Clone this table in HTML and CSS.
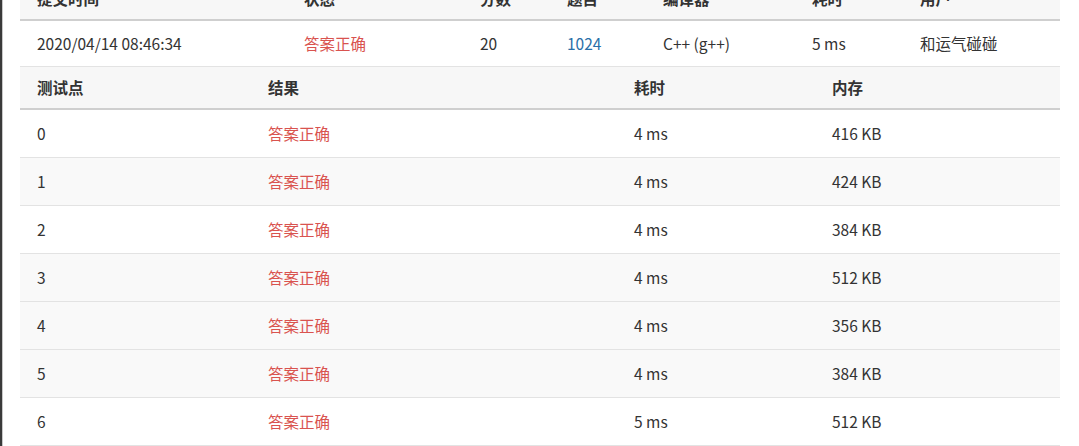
FILE: index.html
```html
<!DOCTYPE html>
<html lang="zh-CN">
<head>
<meta charset="utf-8">
<title>提交详情</title>
<link rel="stylesheet" href="styles.css">
</head>
<body>
<div class="page">
  <div class="content">
    <table class="grid summary">
      <colgroup>
        <col class="c-time"><col class="c-status"><col class="c-score"><col class="c-problem"><col class="c-compiler"><col class="c-cost"><col class="c-user">
      </colgroup>
      <thead>
        <tr><th>提交时间</th><th>状态</th><th>分数</th><th>题目</th><th>编译器</th><th>耗时</th><th>用户</th></tr>
      </thead>
      <tbody>
        <tr>
          <td>2020/04/14 08:46:34</td>
          <td class="ok">答案正确</td>
          <td>20</td>
          <td><a class="link" href="#">1024</a></td>
          <td>C++ (g++)</td>
          <td>5 ms</td>
          <td>和运气碰碰</td>
        </tr>
      </tbody>
    </table>
    <table class="grid cases">
      <colgroup>
        <col class="k-case"><col class="k-result"><col class="k-cost"><col class="k-mem">
      </colgroup>
      <thead>
        <tr><th>测试点</th><th>结果</th><th>耗时</th><th>内存</th></tr>
      </thead>
      <tbody>
        <tr><td>0</td><td class="ok">答案正确</td><td>4 ms</td><td>416 KB</td></tr>
        <tr><td>1</td><td class="ok">答案正确</td><td>4 ms</td><td>424 KB</td></tr>
        <tr><td>2</td><td class="ok">答案正确</td><td>4 ms</td><td>384 KB</td></tr>
        <tr><td>3</td><td class="ok">答案正确</td><td>4 ms</td><td>512 KB</td></tr>
        <tr class="hover"><td>4</td><td class="ok">答案正确</td><td>4 ms</td><td>356 KB</td></tr>
        <tr><td>5</td><td class="ok">答案正确</td><td>4 ms</td><td>384 KB</td></tr>
        <tr><td>6</td><td class="ok">答案正确</td><td>5 ms</td><td>512 KB</td></tr>
      </tbody>
    </table>
  </div>
</div>
</body>
</html>
```
FILE: styles.css
```css
html, body {
  margin: 0;
  padding: 0;
  background: #ffffff;
  overflow: hidden;
}

body {
  font-family: "Noto Sans CJK SC", "Noto Sans", sans-serif;
  font-size: 15.5px;
  color: #333333;
}

.page {
  border-left: 2px solid #3a3a3a;
  box-shadow: inset 1px 0 0 #c8c8c8;
  min-height: 446px;
  box-sizing: border-box;
}

.content {
  margin-top: -22px;
  padding-left: 18px;
  width: 1040px;
}

.grid {
  width: 1040px;
  border-collapse: collapse;
  table-layout: fixed;
}

.grid th,
.grid td {
  text-align: left;
  padding: 0 0 0 17px;
  line-height: 21px;
  white-space: nowrap;
}

.grid th {
  font-weight: 700;
  background: #f7f7f7;
  height: 41px;
  border-bottom: 2px solid #cfcfcf;
  color: #333333;
}

.grid td {
  height: 47px;
  border-bottom: 1px solid #e3e3e3;
}

.summary td {
  height: 45px;
}

.cases tbody tr:nth-child(even) td,
.cases tbody tr.hover td {
  background: #f9f9f9;
}

.ok {
  color: #d9534f;
}

.link {
  color: #2a6fa8;
  text-decoration: none;
}

.c-time { width: 267px; }
.c-status { width: 176px; }
.c-score { width: 87px; }
.c-problem { width: 96px; }
.c-compiler { width: 149px; }
.c-cost { width: 108px; }
.c-user { width: 157px; }

.k-case { width: 231px; }
.k-result { width: 366px; }
.k-cost { width: 198px; }
.k-mem { width: 245px; }
```
